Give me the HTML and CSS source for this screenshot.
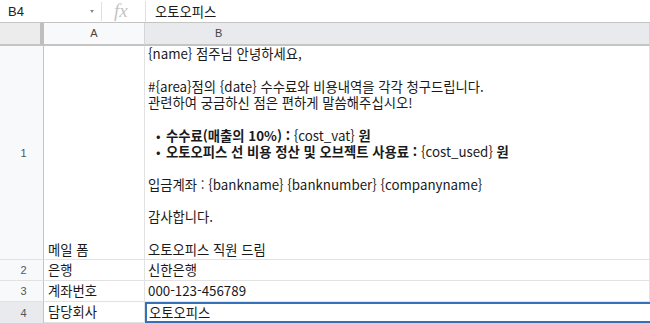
FILE: index.html
```html
<!DOCTYPE html>
<html lang="ko">
<head>
<meta charset="utf-8">
<link rel="stylesheet" href="styles.css">
</head>
<body>
<div class="sheet">
  <div class="formula-bar">
    <div class="name-box"><span class="ref">B4</span><span class="caret"></span></div>
    <div class="fx">fx</div>
    <div class="formula">오토오피스</div>
  </div>
  <div class="grid">
    <div class="corner"></div>
    <div class="col-head">A</div>
    <div class="col-head selected">B</div>

    <div class="row-head row1">1</div>
    <div class="cell a bottom">메일 폼</div>
    <div class="cell b bottom">
      <div class="mail">
        <p>{name} 점주님 안녕하세요,</p>
        <p>#{area}점의 {date} 수수료와 비용내역을 각각 청구드립니다.<br>관련하여 궁금하신 점은 편하게 말씀해주십시오!</p>
        <ul>
          <li>수수료(매출의 10%) : <span class="ph">{cost_vat}</span> 원</li>
          <li>오토오피스 선 비용 정산 및 오브젝트 사용료 : <span class="ph">{cost_used}</span> 원</li>
        </ul>
        <p>입금계좌 : {bankname} {banknumber} {companyname}</p>
        <p>감사합니다.</p>
        <p class="last">오토오피스 직원 드림</p>
      </div>
    </div>

    <div class="row-head">2</div>
    <div class="cell a">은행</div>
    <div class="cell b">신한은행</div>

    <div class="row-head">3</div>
    <div class="cell a">계좌번호</div>
    <div class="cell b">000-123-456789</div>

    <div class="row-head selected">4</div>
    <div class="cell a">담당회사</div>
    <div class="cell b active">오토오피스</div>
  </div>
</div>
</body>
</html>
```
FILE: styles.css
```css
html, body {
  margin: 0;
  padding: 0;
  background: #ffffff;
}
body {
  width: 650px;
  height: 323px;
  overflow: hidden;
  font-family: "Noto Sans CJK KR", "Noto Sans", sans-serif;
  font-size: 13.33px;
  color: #1a1a1a;
}
.sheet {
  display: flex;
  flex-direction: column;
  height: 323px;
}
.formula-bar {
  display: flex;
  align-items: center;
  height: 22px;
  border-bottom: 1px solid #c4c4c4;
  background: #fff;
}
.name-box {
  height: 19px;
  display: flex;
  align-items: center;
  border-right: 1px solid #e0e0e0;
  box-sizing: border-box;
  width: 102px;
  padding-left: 8px;
  padding-right: 7px;
  justify-content: space-between;
}
.ref {
  font-family: "Liberation Sans", Arial, sans-serif;
  font-size: 13px;
  color: #222;
}
.caret {
  width: 0;
  height: 0;
  border-left: 2.5px solid transparent;
  border-right: 2.5px solid transparent;
  border-top: 3px solid #8a8a8a;
}
.fx {
  width: 44px;
  height: 21px;
  box-sizing: border-box;
  border-right: 1px solid #e0e0e0;
  font-family: "Liberation Serif", serif;
  font-style: italic;
  font-size: 19px;
  line-height: 20px;
  color: #c4c4c4;
  padding-left: 12px;
}
.formula {
  padding-left: 9px;
  line-height: 19px;
}
.grid {
  display: grid;
  grid-template-columns: 44px 101px 505px;
  grid-template-rows: 23px 214px 21px 21px 21px;
}
.corner {
  background: #ececec;
  border-right: 4px solid #bfbfbf;
  border-bottom: 2px solid #c4c4c4;
}
.col-head {
  background: #f8f9fa;
  border-right: 1px solid #d6d6d6;
  border-bottom: 2px solid #c4c4c4;
  font-family: "Liberation Sans", Arial, sans-serif;
  font-size: 11px;
  color: #444;
  display: flex;
  align-items: center;
  justify-content: center;
  box-sizing: border-box;
  line-height: 1;
}
.col-head.selected {
  background: #e8eaed;
  justify-content: flex-start;
  padding-left: 70px;
}
.row-head {
  background: #f8f9fa;
  border-right: 1px solid #c4c4c4;
  border-bottom: 1px solid #e2e2e2;
  font-family: "Liberation Sans", Arial, sans-serif;
  font-size: 11px;
  color: #555;
  display: flex;
  align-items: center;
  justify-content: center;
  box-sizing: border-box;
  padding-left: 4px;
}
.row-head.row1 {
  padding-top: 1px;
}
.row-head.selected {
  background: #e8eaed;
  border-bottom: none;
}
.cell {
  border-right: 1px solid #e2e2e2;
  border-bottom: 1px solid #e2e2e2;
  box-sizing: border-box;
  padding: 0 3px;
  display: flex;
  align-items: center;
  line-height: 16px;
  white-space: nowrap;
}
.cell.a {
  padding-left: 4px;
}
.cell.bottom {
  align-items: flex-end;
  padding-bottom: 1px;
}
.cell.active {
  border: 2px solid #3571b8;
  border-right: none;
  padding-left: 2px;
}
.mail {
  line-height: 16.3px;
}
.mail p {
  margin: 0 0 16.3px 0;
}
.mail p.last {
  margin-bottom: 0;
}
.mail ul {
  list-style: none;
  margin: 0 0 16.3px 0;
  padding: 0;
  font-weight: bold;
}
.mail li {
  display: flex;
  white-space: pre;
}
.mail li::before {
  content: "•";
  width: 10px;
  margin-left: 8px;
  font-weight: normal;
}
.mail .ph {
  font-weight: normal;
}
```
